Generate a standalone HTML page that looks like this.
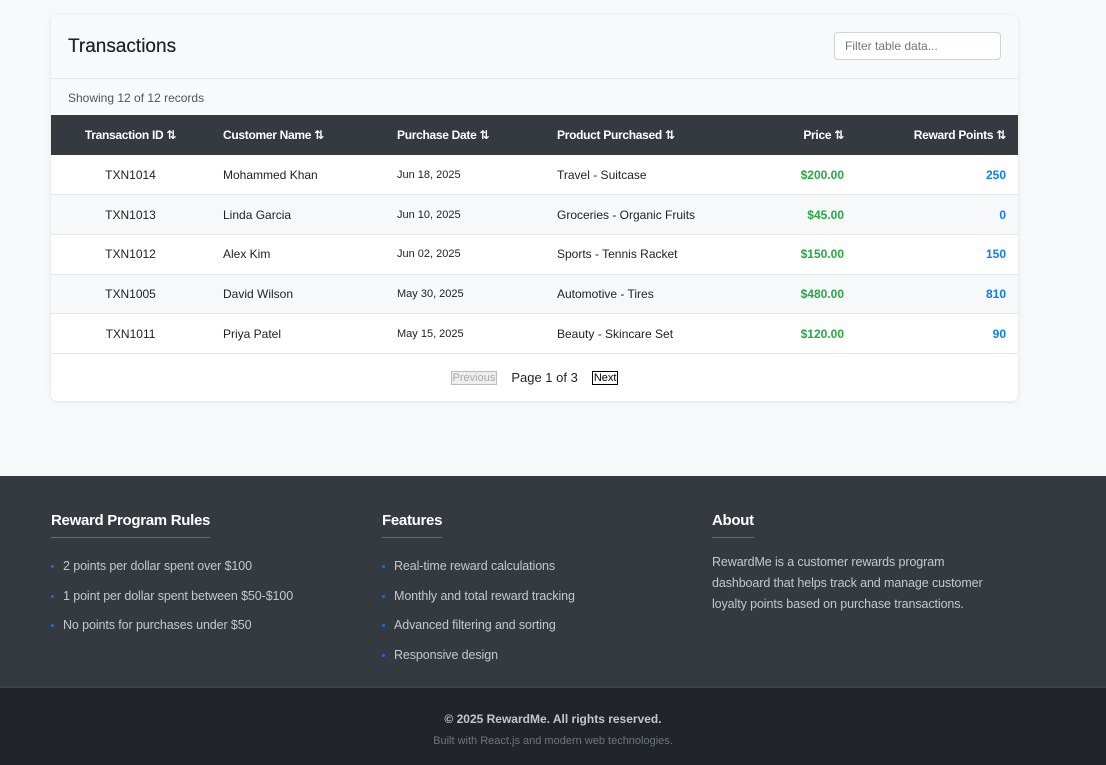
<!DOCTYPE html>
<html><head><meta charset="utf-8"><style>
*{box-sizing:border-box;margin:0;padding:0}
body{width:1106px;height:765px;background:#f7f8fa;font-family:"Liberation Sans","DejaVu Sans",sans-serif;position:relative;overflow:hidden;color:#212529}
.card{position:absolute;left:51px;top:15px;width:967px;height:386px;background:#fff;border-radius:6px;box-shadow:0 1px 4px rgba(0,0,0,.1);overflow:hidden}
.hd{height:64px;background:#f8f9fa;border-bottom:1px solid #e5e7ea;position:relative}
.hd h2{position:absolute;left:17px;top:21px;font-size:19px;font-weight:normal;color:#222;text-shadow:0 0 0.4px #222}
.hd input{position:absolute;left:783px;top:17px;width:167px;height:28px;border:1px solid #ced4da;border-radius:4px;font-size:12px;padding:0 10px;font-family:inherit;color:#555}
.sub{height:36px;background:#f8f9fa;font-size:12px;color:#555;padding:12px 17px}
table{width:100%;border-collapse:collapse;font-size:12px}
th{background:#343a40;color:#fff;height:40px;font-weight:bold;font-size:12px;letter-spacing:-0.3px}
td{height:39.7px;border-bottom:1px solid #e5e7ea;color:#222}
tr:nth-child(odd) td{background:#f7f8fa}
.c1{text-align:center;width:159px}.c2{padding-left:13px;width:174px}.c3{padding-left:13px;width:160px;font-size:11px}.c4{padding-left:13px;width:170px}.c5{text-align:right;width:140px;padding-right:10px}.c6{text-align:right;padding-right:12px}
td.c5{color:#28a745;font-weight:bold}td.c6{color:#0d7bf5;font-weight:bold}
th.c3{font-size:12px}
.pg{position:absolute;top:355px;left:0;width:100%;text-align:center;font-size:12px}
.pg span{display:inline-block;vertical-align:middle}
.b1{border:1px solid #bbb;color:#aaa;background:#eee;font-size:11px;padding:0 1px}
.b2{border:1px solid #000;color:#000;font-size:11px;padding:0 1px}
footer{position:absolute;left:0;top:476px;width:1106px;height:211px;background:#343a40}
.col{position:absolute;top:36px}
.col h3{font-size:15px;color:#fff;font-weight:bold;display:inline-block;padding-bottom:8px;border-bottom:1px solid #1f7bf0;letter-spacing:-0.3px}
.col ul{list-style:none;margin-top:21px}
.col li{font-size:12.5px;color:#c4c8cc;height:29.7px;position:relative;padding-left:12px;letter-spacing:-0.1px}
.col li:before{content:"";position:absolute;left:0;top:6px;width:3px;height:3px;background:#0d6efd;border-radius:50%}
.col p{font-size:12.5px;color:#c4c8cc;line-height:21px;margin-top:14px;width:320px;letter-spacing:-0.1px}
.bot{position:absolute;left:0;top:687px;width:1106px;height:78px;background:#212529;border-top:1px solid #444;text-align:center}
</style></head><body>
<div class="card">
<div class="hd"><h2>Transactions</h2><input placeholder="Filter table data..."></div>
<div class="sub">Showing 12 of 12 records</div>
<table>
<tr><th class="c1">Transaction ID ⇅</th><th class="c2" style="text-align:left">Customer Name ⇅</th><th class="c3" style="text-align:left">Purchase Date ⇅</th><th class="c4" style="text-align:left">Product Purchased ⇅</th><th class="c5">Price ⇅</th><th class="c6">Reward Points ⇅</th></tr>
<tr><td class="c1">TXN1014</td><td class="c2">Mohammed Khan</td><td class="c3">Jun 18, 2025</td><td class="c4">Travel - Suitcase</td><td class="c5">$200.00</td><td class="c6">250</td></tr>
<tr><td class="c1">TXN1013</td><td class="c2">Linda Garcia</td><td class="c3">Jun 10, 2025</td><td class="c4">Groceries - Organic Fruits</td><td class="c5">$45.00</td><td class="c6">0</td></tr>
<tr><td class="c1">TXN1012</td><td class="c2">Alex Kim</td><td class="c3">Jun 02, 2025</td><td class="c4">Sports - Tennis Racket</td><td class="c5">$150.00</td><td class="c6">150</td></tr>
<tr><td class="c1">TXN1005</td><td class="c2">David Wilson</td><td class="c3">May 30, 2025</td><td class="c4">Automotive - Tires</td><td class="c5">$480.00</td><td class="c6">810</td></tr>
<tr><td class="c1">TXN1011</td><td class="c2">Priya Patel</td><td class="c3">May 15, 2025</td><td class="c4">Beauty - Skincare Set</td><td class="c5">$120.00</td><td class="c6">90</td></tr>
</table>
<div class="pg"><span class="b1">Previous</span><span style="margin:0 14px;font-size:13px">Page 1 of 3</span><span class="b2">Next</span></div>
</div>
<footer>
<div class="col" style="left:51px"><h3>Reward Program Rules</h3><ul><li>2 points per dollar spent over $100</li><li>1 point per dollar spent between $50-$100</li><li>No points for purchases under $50</li></ul></div>
<div class="col" style="left:382px"><h3>Features</h3><ul><li>Real-time reward calculations</li><li>Monthly and total reward tracking</li><li>Advanced filtering and sorting</li><li>Responsive design</li></ul></div>
<div class="col" style="left:712px"><h3>About</h3><p>RewardMe is a customer rewards program<br>dashboard that helps track and manage customer<br>loyalty points based on purchase transactions.</p></div>
</footer>
<div class="bot"><div style="margin-top:24px;font-size:12px;font-weight:bold;color:#c4c8cc">© 2025 RewardMe. All rights reserved.</div><div style="margin-top:9px;font-size:11px;color:#6c757d">Built with React.js and modern web technologies.</div></div>
</body></html>
